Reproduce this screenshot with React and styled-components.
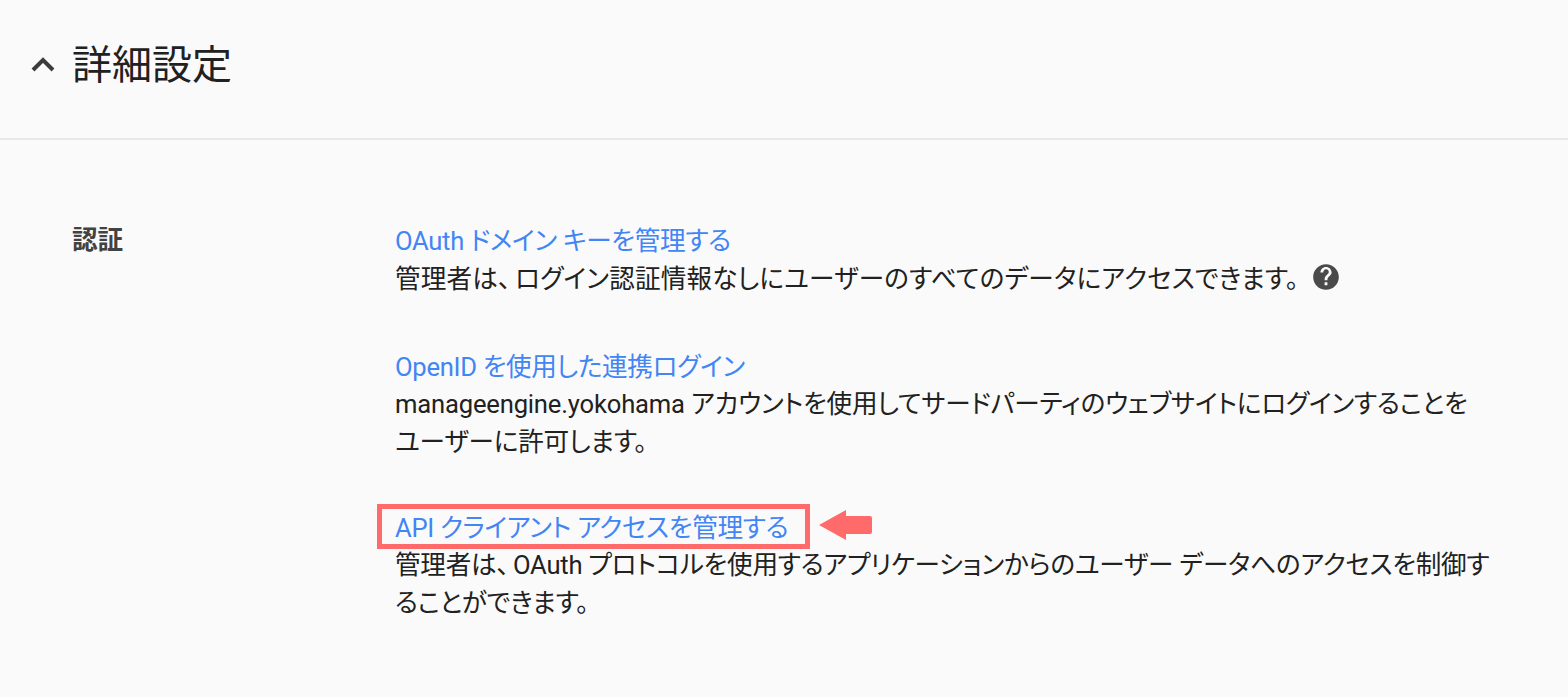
import styled, { createGlobalStyle } from "styled-components";

const GlobalStyle = createGlobalStyle`
	html, body {
		margin: 0;
		height: 100%;
		background: #fafafa;
	}
`;

const Page = styled.div`
	width: 1568px;
	height: 697px;
	overflow: hidden;
	background: #fafafa;
	color: #212121;
	font-family: Roboto, "Noto Sans CJK JP", sans-serif;
`;

const Header = styled.div`
	display: flex;
	align-items: center;
	height: 140px;
	padding: 0 0 7px 30px;
	box-sizing: border-box;
	border-bottom: 2px solid #e8e8e8;
`;

const Chevron = styled.svg`
	width: 26px;
	height: 18px;
	margin: -3px 16px 0 0;
`;

const Title = styled.h1`
	margin: 0;
	font-size: 40px;
	font-weight: 400;
	line-height: 50px;
`;

const Body = styled.div`
	display: flex;
	padding: 83px 60px 0 72px;
`;

const Label = styled.div`
	width: 323px;
	flex: none;
	margin-top: -2px;
	font-size: 25.6px;
	font-weight: 700;
	line-height: 38px;
	color: #424242;
`;

const Items = styled.div`
	flex: 1;
	display: flex;
	flex-direction: column;
	gap: 48.5px;
`;

const Item = styled.div`
	font-size: 25.6px;
	line-height: 37.5px;
	font-feature-settings: "palt";
`;

const LinkRow = styled.div`
	position: relative;
	width: fit-content;
	letter-spacing: -0.3px;
`;

const ItemLink = styled.a`
	color: #4285f4;
	text-decoration: none;
`;

const Desc = styled.div`
	letter-spacing: ${(props) => props.$tracking}px;
`;

const Comma = styled.span`
	margin-right: 4px;
`;

const HelpIcon = styled.svg`
	width: 28px;
	height: 28px;
	margin: 0 0 9.5px 13px;
	vertical-align: -12.5px;
`;

const Highlight = styled.div`
	position: absolute;
	left: -18px;
	top: -6px;
	right: -22px;
	bottom: -2px;
	border: 5px solid #ff6b6b;
`;

const Arrow = styled.svg`
	position: absolute;
	left: calc(100% + 30px);
	top: -1px;
	width: 54px;
	height: 32px;
`;

export default function App() {
	return (
		<Page>
			<GlobalStyle />
			<Header>
				<Chevron viewBox="0 0 26 18">
					<path d="M3 15 L13 5 L23 15" fill="none" stroke="#3c3c3c" strokeWidth="4" />
				</Chevron>
				<Title>詳細設定</Title>
			</Header>
			<Body>
				<Label>認証</Label>
				<Items>
					<Item>
						<LinkRow>
							<ItemLink href="#">OAuth ドメイン キーを管理する</ItemLink>
						</LinkRow>
						<Desc $tracking={0.17}>
							管理者は<Comma>、</Comma>ログイン認証情報なしにユーザーのすべてのデータにアクセスできます。
							<HelpIcon viewBox="0 0 24 24">
								<path
									fill="#4a4a4a"
									d="M12 1C5.9 1 1 5.9 1 12s4.9 11 11 11 11-4.9 11-11S18.1 1 12 1zm1.2 18h-2.4v-2.4h2.4V19zm2.5-8.5-1.1 1.1c-.9.9-1.4 1.6-1.4 3.2h-2.4v-.6c0-1.3.5-2.5 1.4-3.4l1.5-1.5c.4-.4.7-1 .7-1.6 0-1.3-1.1-2.4-2.4-2.4S9.6 6.9 9.6 8.2H7.2C7.2 5.5 9.3 3.4 12 3.4s4.8 2.1 4.8 4.8c0 1-.4 1.6-1.1 2.3z"
								/>
							</HelpIcon>
						</Desc>
					</Item>
					<Item>
						<LinkRow>
							<ItemLink href="#">OpenID を使用した連携ログイン</ItemLink>
						</LinkRow>
						<Desc $tracking={-0.18}>
							manageengine.yokohama アカウントを使用してサードパーティのウェブサイトにログインすることを
							<br />
							ユーザーに許可します。
						</Desc>
					</Item>
					<Item>
						<LinkRow>
							<ItemLink href="#">API クライアント アクセスを管理する</ItemLink>
							<Highlight />
							<Arrow viewBox="0 0 54 32">
								<path fill="#ff6b6b" d="M1 16 L28 1 L28 7 L52 7 Q54 7 54 9 L54 23 Q54 25 52 25 L28 25 L28 31 Z" />
							</Arrow>
						</LinkRow>
						<Desc $tracking={-0.24}>
							管理者は<Comma>、</Comma>OAuth プロトコルを使用するアプリケーションからのユーザー データへのアクセスを制御することができます。
						</Desc>
					</Item>
				</Items>
			</Body>
		</Page>
	);
}
